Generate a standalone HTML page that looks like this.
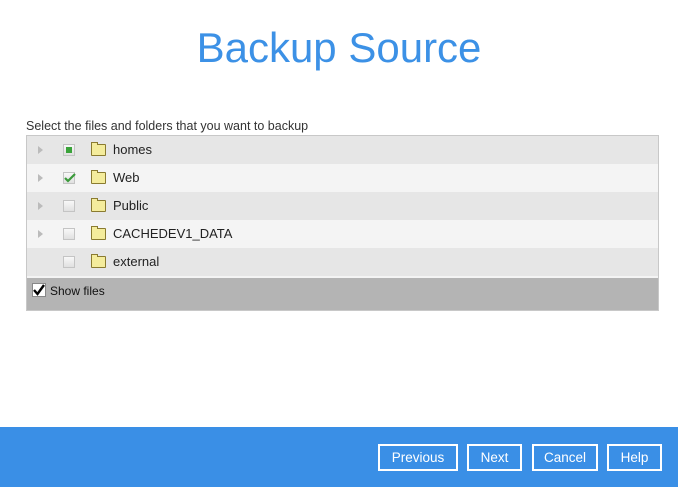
<!DOCTYPE html>
<html><head><style>
body{margin:0;width:678px;height:487px;background:#fff;font-family:"Liberation Sans","DejaVu Sans",sans-serif;position:relative;overflow:hidden}
.title{position:absolute;top:24px;left:0;width:678px;text-align:center;font-size:42px;color:#3c91e6;font-weight:normal}
.lbl{position:absolute;left:26px;top:119px;font-size:12.5px;color:#333}
.box{position:absolute;left:26px;top:135px;width:631px;height:174px;border:1px solid #c8c8c8;background:#f4f4f4}
.row{position:absolute;left:0;width:631px;height:28px;font-size:13px;color:#222}
.row span.t{position:absolute;left:86px;top:6px}
.tri{position:absolute;left:11px;top:10px;width:0;height:0;border-top:4px solid transparent;border-bottom:4px solid transparent;border-left:5px solid #bbb}
.cb{position:absolute;left:36px;top:8px;width:10px;height:10px;border:1px solid #c4c4c4;background:linear-gradient(#f8f8f8,#e0e0e0)}
.fold{position:absolute;left:64px;top:8px;width:13px;height:10px;background:#f4ec9c;border:1px solid #8a7b30;border-radius:1px}
.fold:before{content:"";position:absolute;left:-1px;top:-3px;width:5px;height:2px;background:#f4ec9c;border:1px solid #8a7b30;border-bottom:none}
.bar{position:absolute;left:0;top:142px;width:631px;height:32px;background:#b4b4b4;font-size:12px;color:#111}
.foot{position:absolute;left:0;top:427px;width:678px;height:60px;background:#3a8fe6}
.btn{position:absolute;top:17px;height:23px;border:2px solid #fff;color:#fff;font-size:13.5px;text-align:center;line-height:23px;box-sizing:content-box}
</style></head><body>
<div class="title">Backup Source</div>
<div class="lbl">Select the files and folders that you want to backup</div>
<div class="box">
 <div class="row" style="top:0;background:#e6e6e6"><div class="tri"></div><div class="cb"><div style="position:absolute;left:2px;top:2px;width:6px;height:6px;background:#3aa33a"></div></div><div class="fold"></div><span class="t">homes</span></div>
 <div class="row" style="top:28px;background:#f4f4f4"><div class="tri"></div><div class="cb"><svg width="12" height="10" style="position:absolute;left:0;top:0" viewBox="0 0 12 10"><path d="M1 5 L4 8 L11 1" stroke="#3a9a3a" stroke-width="2.2" fill="none"/></svg></div><div class="fold"></div><span class="t">Web</span></div>
 <div class="row" style="top:56px;background:#e6e6e6"><div class="tri"></div><div class="cb"></div><div class="fold"></div><span class="t">Public</span></div>
 <div class="row" style="top:84px;background:#f4f4f4"><div class="tri"></div><div class="cb"></div><div class="fold"></div><span class="t">CACHEDEV1_DATA</span></div>
 <div class="row" style="top:112px;background:#e6e6e6"><div class="cb"></div><div class="fold"></div><span class="t">external</span></div>
 <div class="bar"><svg width="14" height="14" style="position:absolute;left:5px;top:5px" viewBox="0 0 14 14"><rect x="0.5" y="0.5" width="13" height="13" fill="#fff" stroke="#888"/><path d="M2 7 L5.5 11 L12 2" stroke="#000" stroke-width="2.4" fill="none"/></svg><span style="position:absolute;left:23px;top:6px">Show files</span></div>
</div>
<div class="foot">
 <div class="btn" style="left:378px;width:76px">Previous</div>
 <div class="btn" style="left:467px;width:51px">Next</div>
 <div class="btn" style="left:532px;width:62px">Cancel</div>
 <div class="btn" style="left:607px;width:51px">Help</div>
</div>
</body></html>
